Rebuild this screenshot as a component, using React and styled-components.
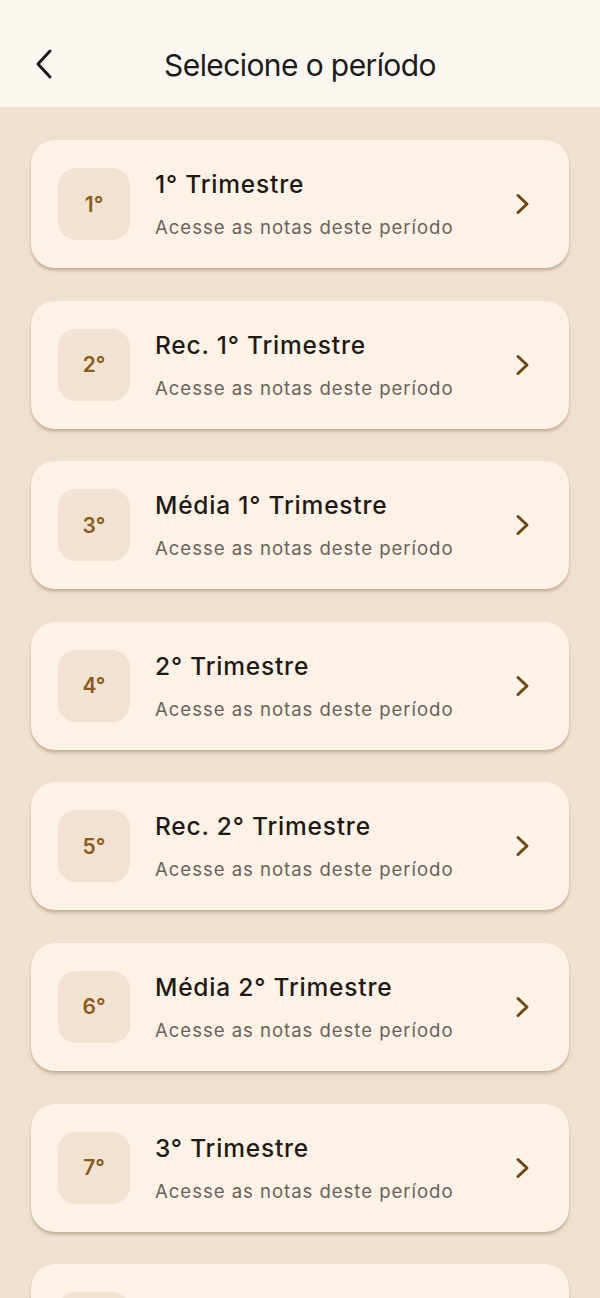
import React from "react";
import styled, { createGlobalStyle } from "styled-components";

const Global = createGlobalStyle`
  html, body { margin: 0; padding: 0; background: #efe0cf; overflow: hidden; }
  body { font-family: Inter, Roboto, "Noto Sans", "Liberation Sans", sans-serif; -webkit-font-smoothing: antialiased; }
  * { box-sizing: border-box; }
`;

const Page = styled.div`
  height: 1298px;
  background: #efe0cf;
  overflow: hidden;
`;

const Header = styled.header`
  height: 107px;
  background: #fdf7f2;
  display: flex;
  align-items: center;
  justify-content: center;
  position: relative;
`;

const BackButton = styled.button`
  position: absolute;
  left: 28px;
  top: 44px;
  width: 32px;
  height: 40px;
  border: 0;
  background: none;
  padding: 0;
  display: flex;
  align-items: center;
  justify-content: center;
  color: #1a1a1a;
`;

const Title = styled.h1`
  margin: 0;
  margin-top: 22px;
  font-family: Inter, Roboto, sans-serif;
  font-weight: 400;
  font-size: 30px;
  letter-spacing: -0.6px;
  color: #1c1a18;
`;

const List = styled.div`
  display: flex;
  flex-direction: column;
  gap: 32.6px;
  padding: 33px 31px 0 31px;
`;

const Card = styled.div`
  height: 128px;
  flex-shrink: 0;
  background: #fef2e6;
  border-radius: 24px;
  box-shadow: 0 3px 3px rgba(120, 90, 55, 0.28), 0 1px 2px rgba(120, 90, 55, 0.12);
  display: flex;
  align-items: center;
  padding: 0 38px 0 27px;
`;

const Badge = styled.div`
  width: 72px;
  height: 72px;
  border-radius: 18px;
  background: #f1e2d2;
  display: flex;
  align-items: center;
  justify-content: center;
  font-weight: 600;
  font-size: 21px;
  color: #8a5a1f;
  flex-shrink: 0;
`;

const Texts = styled.div`
  flex: 1;
  margin-left: 25px;
  display: flex;
  flex-direction: column;
  gap: 18px;
  margin-top: 0;
`;

const CardTitle = styled.div`
  font-size: 24.5px;
  font-weight: 500;
  letter-spacing: 0.8px;
  color: #1e1915;
  line-height: 28px;
`;

const CardSub = styled.div`
  font-size: 18.6px;
  font-weight: 400;
  letter-spacing: 0.95px;
  color: #6a625b;
  line-height: 22px;
`;

const Chevron = styled.svg`
  width: 16px;
  height: 22px;
  flex-shrink: 0;
`;

const items = [
  ["1°", "1° Trimestre"],
  ["2°", "Rec. 1° Trimestre"],
  ["3°", "Média 1° Trimestre"],
  ["4°", "2° Trimestre"],
  ["5°", "Rec. 2° Trimestre"],
  ["6°", "Média 2° Trimestre"],
  ["7°", "3° Trimestre"],
  ["8°", "Rec. 3° Trimestre"],
];

export default function App() {
  return (
    <>
      <Global />
      <Page>
        <Header>
          <BackButton aria-label="Voltar">
            <svg width="20" height="32" viewBox="0 0 20 32" fill="none">
              <path d="M16 3 L4 16 L16 29" stroke="#1a1a1a" strokeWidth="3" strokeLinecap="round" strokeLinejoin="round" />
            </svg>
          </BackButton>
          <Title>Selecione o período</Title>
        </Header>
        <List>
          {items.map(([n, t]) => (
            <Card key={n}>
              <Badge>{n}</Badge>
              <Texts>
                <CardTitle>{t}</CardTitle>
                <CardSub>Acesse as notas deste período</CardSub>
              </Texts>
              <Chevron viewBox="0 0 16 22" fill="none">
                <path d="M3 2.5 L12 11 L3 19.5" stroke="#6b4815" strokeWidth="3" strokeLinecap="round" strokeLinejoin="round" />
              </Chevron>
            </Card>
          ))}
        </List>
      </Page>
    </>
  );
}
